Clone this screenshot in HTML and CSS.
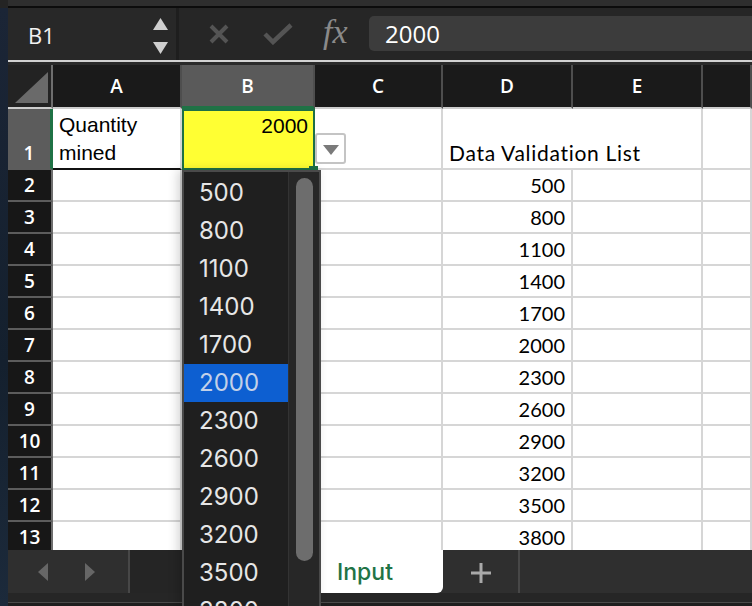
FILE: index.html
```html
<!DOCTYPE html>
<html lang="en">
<head>
<meta charset="utf-8">
<title>Data Validation</title>
<link rel="stylesheet" href="styles.css">
</head>
<body>
<div class="desk"></div>
<div class="app">
  <div class="titlestrip"></div>
  <div class="fbar">
    <div class="namebox">
      <span class="nb-text">B1</span>
      <svg class="nb-arrows" width="15" height="36" viewBox="0 0 15 36">
        <polygon points="0,12 7.5,0 15,12" fill="#cfcfcf"/>
        <polygon points="0,24 15,24 7.5,36" fill="#cfcfcf"/>
      </svg>
    </div>
    <div class="fb-icons">
      <svg class="ico-x" width="22" height="20" viewBox="0 0 22 20">
        <path d="M3 2 L19 18 M19 2 L3 18" stroke="#545454" stroke-width="4" stroke-linecap="butt"/>
      </svg>
      <svg class="ico-check" width="30" height="22" viewBox="0 0 30 22">
        <path d="M2 11 L10 19 L28 2" stroke="#545454" stroke-width="4.5" fill="none"/>
      </svg>
      <span class="fx">fx</span>
    </div>
    <div class="finput">2000</div>
  </div>
  <div class="sep"></div>
  <div class="sheet">
    <div class="corner"><svg width="33" height="31" viewBox="0 0 33 31"><polygon points="0,31 33,31 33,0" fill="#6a6a6a"/></svg></div>
    <div class="ch">A</div><div class="ch sel">B</div><div class="ch">C</div><div class="ch">D</div><div class="ch">E</div><div class="ch"></div>

    <div class="rh sel">1</div>
    <div class="c a1">Quantity<br>mined</div>
    <div class="c b1">2000</div>
    <div class="c"></div>
    <div class="c d1">Data Validation List</div>
    <div class="c"></div>
    <div class="c"></div>

    <div class="rh">2</div><div class="c"></div><div class="c"></div><div class="c"></div><div class="c num">500</div><div class="c"></div><div class="c"></div>
    <div class="rh">3</div><div class="c"></div><div class="c"></div><div class="c"></div><div class="c num">800</div><div class="c"></div><div class="c"></div>
    <div class="rh">4</div><div class="c"></div><div class="c"></div><div class="c"></div><div class="c num">1100</div><div class="c"></div><div class="c"></div>
    <div class="rh">5</div><div class="c"></div><div class="c"></div><div class="c"></div><div class="c num">1400</div><div class="c"></div><div class="c"></div>
    <div class="rh">6</div><div class="c"></div><div class="c"></div><div class="c"></div><div class="c num">1700</div><div class="c"></div><div class="c"></div>
    <div class="rh">7</div><div class="c"></div><div class="c"></div><div class="c"></div><div class="c num">2000</div><div class="c"></div><div class="c"></div>
    <div class="rh">8</div><div class="c"></div><div class="c"></div><div class="c"></div><div class="c num">2300</div><div class="c"></div><div class="c"></div>
    <div class="rh">9</div><div class="c"></div><div class="c"></div><div class="c"></div><div class="c num">2600</div><div class="c"></div><div class="c"></div>
    <div class="rh">10</div><div class="c"></div><div class="c"></div><div class="c"></div><div class="c num">2900</div><div class="c"></div><div class="c"></div>
    <div class="rh">11</div><div class="c"></div><div class="c"></div><div class="c"></div><div class="c num">3200</div><div class="c"></div><div class="c"></div>
    <div class="rh">12</div><div class="c"></div><div class="c"></div><div class="c"></div><div class="c num">3500</div><div class="c"></div><div class="c"></div>
    <div class="rh">13</div><div class="c"></div><div class="c"></div><div class="c"></div><div class="c num">3800</div><div class="c"></div><div class="c"></div>
  </div>
  <div class="tabbar">
    <div class="nav">
      <svg width="10" height="18" viewBox="0 0 10 18"><polygon points="10,0 10,18 0,9" fill="#666"/></svg>
      <svg width="10" height="18" viewBox="0 0 10 18"><polygon points="0,0 10,9 0,18" fill="#666"/></svg>
    </div>
    <div class="tabs-gap"></div>
    <div class="tab">Input</div>
    <div class="plus-area">
      <svg width="20" height="20" viewBox="0 0 20 20"><path d="M10 0 V20 M0 10 H20" stroke="#a9a9a9" stroke-width="3"/></svg>
    </div>
    <div class="tabs-rest"></div>
  </div>
  <div class="bottomstrip"></div>

  <div class="dv-btn">
    <svg width="16" height="10" viewBox="0 0 16 10"><polygon points="0,0 16,0 8,10" fill="#7a7a7a"/></svg>
  </div>
  <div class="dv-list">
    <div class="dv-items">
      <div class="dv-item">500</div>
      <div class="dv-item">800</div>
      <div class="dv-item">1100</div>
      <div class="dv-item">1400</div>
      <div class="dv-item">1700</div>
      <div class="dv-item active">2000</div>
      <div class="dv-item">2300</div>
      <div class="dv-item">2600</div>
      <div class="dv-item">2900</div>
      <div class="dv-item">3200</div>
      <div class="dv-item">3500</div>
      <div class="dv-item">3800</div>
    </div>
    <div class="dv-track"><div class="dv-thumb"></div></div>
  </div>
</div>
</body>
</html>
```
FILE: styles.css
```css
* { box-sizing: border-box; margin: 0; padding: 0; }
html, body { width: 752px; height: 606px; overflow: hidden; }
body {
  display: flex;
  background: #18202c;
  font-family: "Open Sans", sans-serif;
}
.desk {
  width: 8px;
  flex: none;
  background: linear-gradient(#242424 0 8px, #1b2536 8px, #14202e 60%, #1c2a3b);
}
.app {
  flex: 1;
  min-width: 0;
  position: relative;
  display: flex;
  flex-direction: column;
  background: #2b2b2b;
}
.titlestrip {
  height: 8px;
  flex: none;
  background: #2e2e2e;
  border-bottom: 2px solid #0c0c0c;
}
.fbar {
  height: 52px;
  flex: none;
  display: flex;
  background: #262626;
}
.namebox {
  width: 171px;
  display: flex;
  align-items: center;
  justify-content: space-between;
  padding: 0 8px 0 20px;
  background: #282828;
  border-right: 3px solid #1e1e1e;
}
.nb-text {
  color: #f2f2f2;
  font-size: 22px;
  line-height: 1;
  padding-top: 2px;
}
.nb-arrows { margin-top: 4px; }
.fb-icons {
  display: flex;
  align-items: center;
  padding-left: 29px;
}
.ico-check { margin-left: 33px; }
.fx {
  margin-left: 30px;
  font-family: "Liberation Serif", serif;
  font-style: italic;
  font-size: 34px;
  color: #8a8a8a;
  line-height: 1;
  width: 32px;
  padding-bottom: 4px;
}
.finput {
  flex: 1;
  margin: 8px 0 9px 14px;
  padding-left: 16px;
  background: #3c3c3c;
  border-radius: 5px 0 0 5px;
  color: #ffffff;
  font-size: 24px;
  line-height: 35px;
}
.sep {
  height: 5px;
  flex: none;
  border-top: 2px solid #d2d2d2;
  background: #2a2a2a;
}
.sheet {
  height: 485px;
  flex: none;
  overflow: hidden;
  display: grid;
  grid-template-columns: 45px 129px 133px 128px 130px 130px 1fr;
  grid-template-rows: 44px 61px repeat(12, 32px);
  background: #fff;
}
.corner {
  background: #232323;
  border-right: 2px solid #6e6e6e;
  border-bottom: 2px solid #cdcdcd;
  display: flex;
  align-items: flex-end;
  justify-content: flex-end;
  padding: 0 3px 4px 0;
}
.ch {
  background: #1a1a1a;
  color: #fff;
  font-weight: 600;
  font-size: 19px;
  display: flex;
  align-items: center;
  justify-content: center;
  border-right: 2px solid #4e4e4e;
  border-bottom: 2px solid #cdcdcd;
}
.ch.sel {
  background: #5a5a5a;
  border-bottom: 3px solid #1f7245;
}
.rh {
  background: #171717;
  color: #fff;
  font-weight: 600;
  font-size: 19px;
  display: flex;
  align-items: center;
  justify-content: center;
  border-right: 2px solid #6e6e6e;
  border-bottom: 2px solid #5c5c5c;
}
.rh.sel {
  background: #5c5c5c;
  align-items: flex-end;
  padding-bottom: 2px;
  border-right: 3px solid #1f7245;
}
.c {
  background: #fff;
  border-right: 2px solid #d6d6d6;
  border-bottom: 2px solid #d6d6d6;
  color: #000;
  font-family: "Liberation Sans", Arial, sans-serif;
  font-size: 21px;
  white-space: nowrap;
}
.c.a1 {
  border-bottom: 2px solid #111;
  padding: 2px 6px;
  line-height: 28px;
}
.c.b1 {
  position: relative;
  background: #ffff33;
  border: 2px solid #1e7046;
  text-align: right;
  padding: 1px 5px;
  line-height: 28px;
}
.c.b1::after {
  content: "";
  position: absolute;
  right: -5px;
  bottom: -6px;
  width: 9px;
  height: 8px;
  background: #1e7046;
}
.c.d1 {
  z-index: 1;
  border-right: none;
  font-family: Lato, sans-serif;
  font-size: 21px;
  letter-spacing: 0.7px;
  display: flex;
  align-items: flex-end;
  padding: 0 6px 3px;
}
.c.num {
  font-family: Lato, sans-serif;
  font-size: 20px;
  text-align: right;
  padding-right: 6px;
  line-height: 31px;
}
.tabbar {
  height: 43px;
  flex: none;
  display: flex;
  background: #2f2f2f;
}
.nav {
  width: 122px;
  display: flex;
  align-items: center;
  gap: 37px;
  padding-left: 30px;
  border-right: 2px solid #474747;
}
.tabs-gap {
  width: 190px;
  background: #252525;
}
.tab {
  width: 123px;
  background: #fff;
  border-radius: 0 0 6px 0;
  color: #217346;
  font-family: Inter, sans-serif;
  font-weight: 500;
  font-size: 23px;
  display: flex;
  align-items: center;
  padding-left: 17px;
}
.plus-area {
  width: 77px;
  display: flex;
  align-items: center;
  justify-content: center;
  padding-top: 2px;
  border-right: 2px solid #474747;
}
.tabs-rest { flex: 1; }
.bottomstrip {
  flex: 1;
  background: linear-gradient(#262626 0 9px, #4a4a4a 9px 10px, #1e1e1e 10px);
}
.dv-btn {
  position: absolute;
  left: 307px;
  top: 133px;
  width: 31px;
  height: 31px;
  background: #fff;
  border: 2px solid #c4c4c4;
  border-radius: 3px;
  display: flex;
  align-items: center;
  justify-content: center;
  padding-top: 2px;
}
.dv-list {
  position: absolute;
  left: 174px;
  top: 170px;
  width: 139px;
  height: 450px;
  display: flex;
  background: #1f1f1f;
  border: 2px solid #4a4a4a;
  box-shadow: -4px 0 10px rgba(0, 0, 0, 0.18);
  overflow: hidden;
}
.dv-items {
  width: 104px;
  padding-top: 2px;
}
.dv-item {
  height: 38px;
  line-height: 38px;
  padding-left: 15px;
  font-family: Inter, sans-serif;
  font-size: 24px;
  color: #e6e6e6;
}
.dv-item.active {
  background: #0d5fd1;
  color: #c3d1e8;
}
.dv-track {
  flex: 1;
  background: #272727;
  border-left: 1px solid #333;
  padding: 6px 0 0 7px;
}
.dv-thumb {
  width: 17px;
  height: 383px;
  border-radius: 9px;
  background: #6d6d6d;
}
```
